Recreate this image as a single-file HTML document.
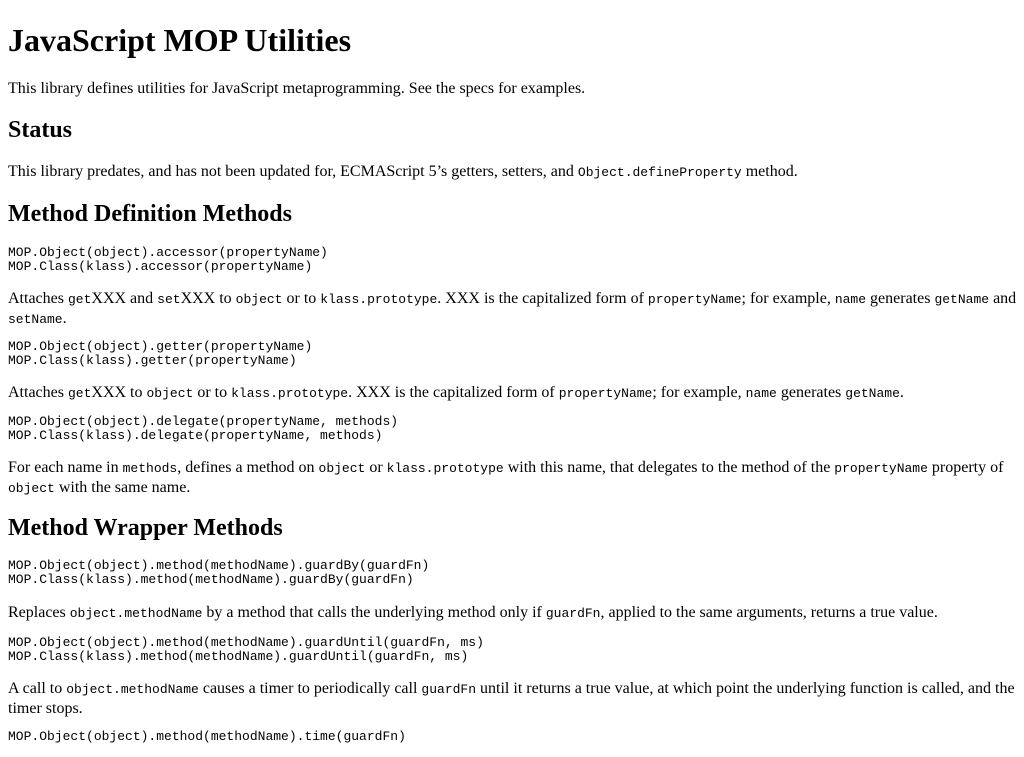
<!DOCTYPE html>
<html><head><meta charset="utf-8"><style>
body{margin:0;background:#fff;color:#000;font-family:"Liberation Serif",serif;font-size:16px;}
.b{position:absolute;left:8px;margin:0;white-space:nowrap}
p.b{line-height:19px;white-space:normal;width:1010px}
h1.b{font-size:32px;line-height:36px;font-weight:bold}
h2.b{font-size:24px;line-height:28px;font-weight:bold}
pre.b{font-family:"Liberation Mono",monospace;font-size:13px;line-height:13.5px;white-space:pre}
code{font-family:"Liberation Mono",monospace;font-size:13px}
</style></head><body>
<h1 class="b" style="top:22px">JavaScript MOP Utilities</h1>
<p class="b" style="top:79px">This library defines utilities for JavaScript metaprogramming. See the specs for examples.</p>
<h2 class="b" style="top:116px">Status</h2>
<p class="b" style="top:162px">This library predates, and has not been updated for, ECMAScript 5’s getters, setters, and <code>Object.defineProperty</code> method.</p>
<h2 class="b" style="top:200px">Method Definition Methods</h2>
<pre class="b" style="top:246px">MOP.Object(object).accessor(propertyName)
MOP.Class(klass).accessor(propertyName)</pre>
<p class="b" style="top:289px">Attaches <code>get</code>XXX and <code>set</code>XXX to <code>object</code> or to <code>klass.prototype</code>. XXX is the capitalized form of <code>propertyName</code>; for example, <code>name</code> generates <code>getName</code> and <code>setName</code>.</p>
<pre class="b" style="top:340px">MOP.Object(object).getter(propertyName)
MOP.Class(klass).getter(propertyName)</pre>
<p class="b" style="top:383px">Attaches <code>get</code>XXX to <code>object</code> or to <code>klass.prototype</code>. XXX is the capitalized form of <code>propertyName</code>; for example, <code>name</code> generates <code>getName</code>.</p>
<pre class="b" style="top:415px">MOP.Object(object).delegate(propertyName, methods)
MOP.Class(klass).delegate(propertyName, methods)</pre>
<p class="b" style="top:458px">For each name in <code>methods</code>, defines a method on <code>object</code> or <code>klass.prototype</code> with this name, that delegates to the method of the <code>propertyName</code> property of <code>object</code> with the same name.</p>
<h2 class="b" style="top:514px">Method Wrapper Methods</h2>
<pre class="b" style="top:559px">MOP.Object(object).method(methodName).guardBy(guardFn)
MOP.Class(klass).method(methodName).guardBy(guardFn)</pre>
<p class="b" style="top:603px">Replaces <code>object.methodName</code> by a method that calls the underlying method only if <code>guardFn</code>, applied to the same arguments, returns a true value.</p>
<pre class="b" style="top:636px">MOP.Object(object).method(methodName).guardUntil(guardFn, ms)
MOP.Class(klass).method(methodName).guardUntil(guardFn, ms)</pre>
<p class="b" style="top:679px">A call to <code>object.methodName</code> causes a timer to periodically call <code>guardFn</code> until it returns a true value, at which point the underlying function is called, and the timer stops.</p>
<pre class="b" style="top:730px">MOP.Object(object).method(methodName).time(guardFn)</pre>
</body></html>
